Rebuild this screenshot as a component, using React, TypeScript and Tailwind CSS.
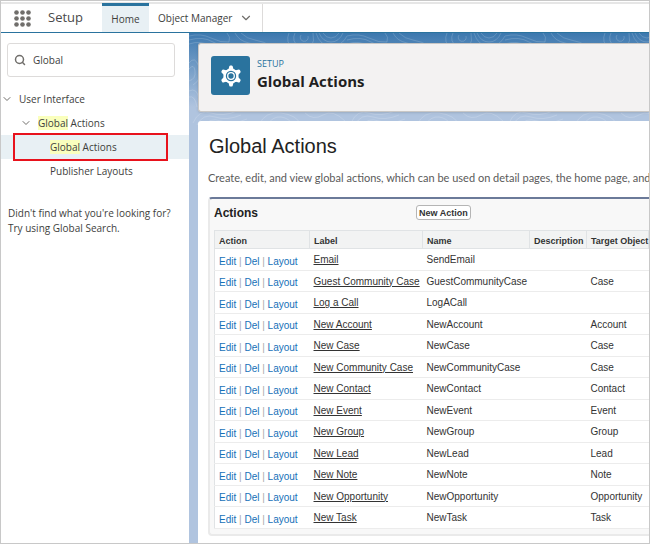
import { ChevronDown, Search } from "lucide-react";

const actions = [
  { label: "Email", name: "SendEmail", target: "" },
  { label: "Guest Community Case", name: "GuestCommunityCase", target: "Case" },
  { label: "Log a Call", name: "LogACall", target: "" },
  { label: "New Account", name: "NewAccount", target: "Account" },
  { label: "New Case", name: "NewCase", target: "Case" },
  { label: "New Community Case", name: "NewCommunityCase", target: "Case" },
  { label: "New Contact", name: "NewContact", target: "Contact" },
  { label: "New Event", name: "NewEvent", target: "Event" },
  { label: "New Group", name: "NewGroup", target: "Group" },
  { label: "New Lead", name: "NewLead", target: "Lead" },
  { label: "New Note", name: "NewNote", target: "Note" },
  { label: "New Opportunity", name: "NewOpportunity", target: "Opportunity" },
  { label: "New Task", name: "NewTask", target: "Task" },
];

const columns = ["Action", "Label", "Name", "Description", "Target Object"];

function AppLauncherIcon() {
  return (
    <svg viewBox="0 0 17 17" className="size-[17px] fill-[#706e6b]">
      {[2.5, 8.5, 14.5].map((y) =>
        [2.5, 8.5, 14.5].map((x) => (
          <circle key={`${x}-${y}`} cx={x} cy={y} r="2.3" />
        )),
      )}
    </svg>
  );
}

function GearIcon() {
  return (
    <svg viewBox="0 0 24 24" className="size-6" fill="none">
      {[0, 60, 120, 180, 240, 300].map((angle) => (
        <path
          key={angle}
          d="M8.6 6 Q10 4.8 10.1 3 Q10.2 1.4 11.3 1.4 H12.7 Q13.8 1.4 13.9 3 Q14 4.8 15.4 6 Z"
          fill="#fff"
          transform={`rotate(${angle} 12 12)`}
        />
      ))}
      <circle cx="12" cy="12" r="7.6" fill="#fff" />
      <circle cx="12" cy="12" r="5.2" fill="#2a739e" />
      <circle cx="12" cy="12" r="3.3" stroke="#fff" strokeWidth="1.3" />
    </svg>
  );
}

function Contours() {
  return (
    <svg
      className="absolute inset-0 size-full"
      fill="none"
      stroke="#fff"
      strokeOpacity="0.2"
      strokeWidth="0.8"
    >
      <defs>
        <pattern id="contours" width="158" height="104" patternUnits="userSpaceOnUse">
          <path d="M0 3 Q12 0 22 5 T40 9 Q42 4 38 0 M0 7 Q14 3 24 9 T44 12 M0 11 Q12 7 22 13 M46 0 Q50 8 60 10 T76 16 M52 0 Q58 6 66 7 T84 14" />
          <path d="M100 0 Q96 9 104 16 M106 0 Q102 8 110 14 M112 2 A4 4 0 1 0 119 3 M124 0 Q126 8 122 14 M130 0 Q134 9 142 9 T154 0 M134 0 Q137 5 142 5 T150 0 M127 0 Q131 13 142 13 T158 3" />
          <path d="M0 30 Q6 22 10 34 T4 52 M0 36 Q5 30 6 38 T0 48 M0 58 Q8 54 10 66 M0 64 Q6 62 8 74" />
          <path d="M4 90 Q10 76 22 80 T48 78 M8 92 Q14 80 26 84 T52 82 M14 94 Q20 84 32 88 T58 86 M70 92 Q76 78 92 80 T112 92 M78 92 Q84 83 92 84 T104 92 M116 80 Q124 88 134 82 T156 88" />
        </pattern>
      </defs>
      <rect width="100%" height="104" fill="url(#contours)" stroke="none" />
    </svg>
  );
}

function TopNav() {
  return (
    <header className="mt-px flex h-[31px] shrink-0 items-stretch border-t-2 border-b border-t-[#e6e6e6] border-b-[#2a739e] bg-white font-['Open_Sans',sans-serif]">
      <div className="flex w-[101px] items-center gap-[17px] pl-[13px]">
        <button aria-label="App Launcher">
          <AppLauncherIcon />
        </button>
        <span className="text-[13px] text-[#4a4a4a]">Setup</span>
      </div>
      <nav className="flex text-[10px] text-[#3e3e3c]">
        <a
          href="#home"
          className="-mt-px flex w-[47px] items-center justify-center border-t-3 border-[#2a739e] bg-[#e8f0f4]"
        >
          Home
        </a>
        <a
          href="#objects"
          className="flex items-center gap-[7px] border-r border-[#dddbda] pr-[9px] pl-[9px]"
        >
          Object Manager
          <ChevronDown className="size-[14px] text-[#706e6b]" strokeWidth={2} />
        </a>
      </nav>
    </header>
  );
}

function Mark() {
  return <mark className="bg-[#faffbd] text-inherit">Global</mark>;
}

function Sidebar() {
  return (
    <aside className="w-[188px] shrink-0 bg-white font-['Open_Sans',sans-serif] text-[10px] text-[#3e3e3c]">
      <label className="mt-[10px] ml-[6px] flex h-[34px] w-[168px] items-center gap-[7px] rounded-[3px] border border-[#dddbda] pl-[6px]">
        <Search className="size-3 shrink-0 text-[#706e6b]" strokeWidth={3} />
        <input
          aria-label="Quick Find"
          defaultValue="Global"
          className="w-full min-w-0 bg-transparent outline-none"
        />
      </label>
      <ul className="mt-[10px] leading-6">
        <li className="flex items-center gap-[6px]">
          <ChevronDown className="size-3 text-[#706e6b]" strokeWidth={2} />
          User Interface
        </li>
        <li className="flex items-center gap-[6px] pl-[19px]">
          <ChevronDown className="size-3 text-[#706e6b]" strokeWidth={2} />
          <span>
            <Mark /> Actions
          </span>
        </li>
        <li className="relative bg-[#e8f0f4] pl-[49px]">
          <a href="#global-actions">
            <Mark /> Actions
          </a>
          <div className="absolute -top-[2px] left-3 h-7 w-[155px] border-2 border-[#e8121c]" />
        </li>
        <li className="pl-[49px]">
          <a href="#publisher-layouts">Publisher Layouts</a>
        </li>
      </ul>
      <p className="mt-[23px] pl-[7px] leading-[15px]">
        Didn't find what you're looking for?
        <br />
        Try using Global Search.
      </p>
    </aside>
  );
}

function PageHeader() {
  return (
    <div className="relative flex h-[69px] shrink-0 items-start gap-[7px] rounded-l-[3px] border border-r-0 border-[#c9c7c5] bg-[#f3f2f2] pt-3 pl-3 font-['Open_Sans',sans-serif] shadow-sm">
      <div className="flex size-[39px] items-center justify-center rounded-[3px] bg-[#2a739e]">
        <GearIcon />
      </div>
      <div>
        <p className="text-[9px] leading-[15px] text-[#2a739e]">SETUP</p>
        <h1 className="text-[15px] leading-5 font-bold text-[#1f1f1f]">Global Actions</h1>
      </div>
    </div>
  );
}

function ActionsTable() {
  return (
    <table className="w-full table-fixed border-collapse border border-r-0 border-[#e0e3e5] bg-white text-left text-[10px] leading-3 text-[#333]">
      <colgroup>
        <col className="w-[95px]" />
        <col className="w-[113px]" />
        <col className="w-[107px]" />
        <col className="w-[57px]" />
        <col />
      </colgroup>
      <thead>
        <tr className="h-[18px] bg-[#f2f3f3] text-[9px]">
          {columns.map((column) => (
            <th key={column} className="border border-[#e0e3e5] pt-[2px] pl-1 whitespace-nowrap">
              {column}
            </th>
          ))}
        </tr>
      </thead>
      <tbody>
        {actions.map((action) => (
          <tr key={action.name} className="h-[22px] border-b border-[#ececec] even:h-[21px]">
            <td className="pt-1 pl-1 whitespace-nowrap text-[#aaa]">
              <a href="#edit" className="text-[#1570b8]">Edit</a> |{" "}
              <a href="#del" className="text-[#1570b8]">Del</a> |{" "}
              <a href="#layout" className="text-[#1570b8]">Layout</a>
            </td>
            <td className="pt-px pl-1 whitespace-nowrap">
              <a href="#action" className="underline">{action.label}</a>
            </td>
            <td className="pt-px pl-1">{action.name}</td>
            <td />
            <td className="pt-px pl-1">{action.target}</td>
          </tr>
        ))}
      </tbody>
    </table>
  );
}

export default function App() {
  return (
    <div className="flex min-h-screen flex-col overflow-hidden border border-[#c8c8c8] bg-white">
      <TopNav />
      <div className="flex flex-1">
        <Sidebar />
        <main className="relative flex min-w-0 flex-1 flex-col bg-[#b0c4df] bg-[linear-gradient(#3c78ae,#5186b8_12px,#b0c4df_74px)] pt-[10px] pl-[9px]">
          <Contours />
          <PageHeader />
          <section className="relative mt-[9px] flex-1 rounded-tl-[3px] bg-white pt-3 pl-[10px] font-['Liberation_Sans',sans-serif]">
            <h2 className="pl-[1px] text-[20px] leading-[26px] text-[#222]">Global Actions</h2>
            <p className="mt-[11px] font-[Lato,sans-serif] text-[11px] leading-4 whitespace-nowrap text-[#5a5a5a]">
              Create, edit, and view global actions, which can be used on detail pages, the home page, and
            </p>
            <div className="mt-[11px] mb-[7px] rounded-l-[4px] border-t-2 border-b-2 border-l-2 border-[#eaeaea] border-t-[#6b7a99] bg-[#f8f8f8] pb-[5px] pl-1">
              <div className="flex h-[31px] items-center pb-1">
                <h3 className="w-[202px] text-[12px] font-bold text-[#222]">Actions</h3>
                <button className="h-[15px] rounded-[3px] border border-[#b5b5b5] bg-white px-[2px] text-[9px] leading-3 font-bold text-[#333]">
                  New Action
                </button>
              </div>
              <ActionsTable />
            </div>
          </section>
        </main>
      </div>
    </div>
  );
}
